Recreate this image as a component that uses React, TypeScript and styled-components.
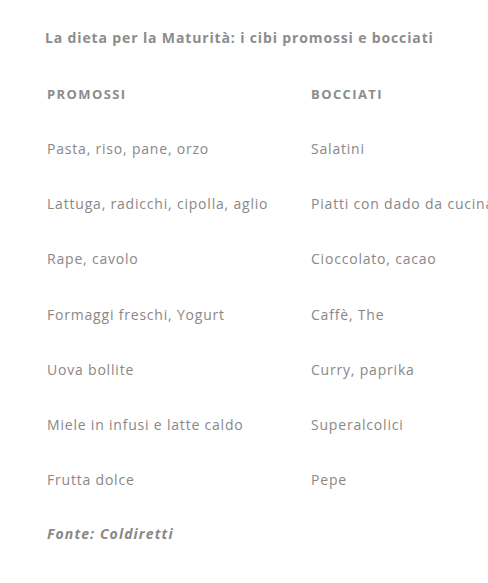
import styled, { createGlobalStyle } from "styled-components";

const GlobalStyle = createGlobalStyle`
  html, body {
    margin: 0;
    padding: 0;
    background: #ffffff;
    overflow: hidden;
  }
  body {
    font-family: "Open Sans", "Liberation Sans", sans-serif;
  }
`;

const Article = styled.div`
  padding: 27px 0 0 45px;
  width: 640px;
  color: #8a8786;
`;

const Title = styled.h4`
  margin: 0 0 17px;
  font-size: 14px;
  font-weight: 700;
  line-height: 22px;
  letter-spacing: 0.86px;
  color: #8c8c8c;
`;

const Table = styled.table`
  border-collapse: collapse;
  font-size: 14px;
`;

const HeadCell = styled.th<{ $wide?: boolean }>`
  text-align: left;
  padding: 0 0 0 2px;
  height: 55px;
  font-size: 13px;
  font-weight: 700;
  text-transform: uppercase;
  letter-spacing: 1.4px;
  color: #8c8c8c;
  width: ${(p) => (p.$wide ? "262px" : "auto")};
`;

const Cell = styled.td`
  padding: 0 0 0 2px;
  height: 55.2px;
  white-space: nowrap;
  letter-spacing: 0.8px;
`;

const Source = styled.p`
  margin: 16px 0 0 2px;
  font-size: 14px;
  line-height: 22px;
  font-weight: 700;
  font-style: italic;
  letter-spacing: 1.1px;
`;

const rows: [string, string][] = [
  ["Pasta, riso, pane, orzo", "Salatini"],
  ["Lattuga, radicchi, cipolla, aglio", "Piatti con dado da cucina"],
  ["Rape, cavolo", "Cioccolato, cacao"],
  ["Formaggi freschi, Yogurt", "Caffè, The"],
  ["Uova bollite", "Curry, paprika"],
  ["Miele in infusi e latte caldo", "Superalcolici"],
  ["Frutta dolce", "Pepe"],
];

export default function App() {
  return (
    <>
      <GlobalStyle />
      <Article>
        <Title>La dieta per la Maturità: i cibi promossi e bocciati</Title>
        <Table>
          <thead>
            <tr>
              <HeadCell $wide>Promossi</HeadCell>
              <HeadCell>Bocciati</HeadCell>
            </tr>
          </thead>
          <tbody>
            {rows.map(([good, bad]) => (
              <tr key={good}>
                <Cell>{good}</Cell>
                <Cell>{bad}</Cell>
              </tr>
            ))}
          </tbody>
        </Table>
        <Source>Fonte: Coldiretti</Source>
      </Article>
    </>
  );
}
